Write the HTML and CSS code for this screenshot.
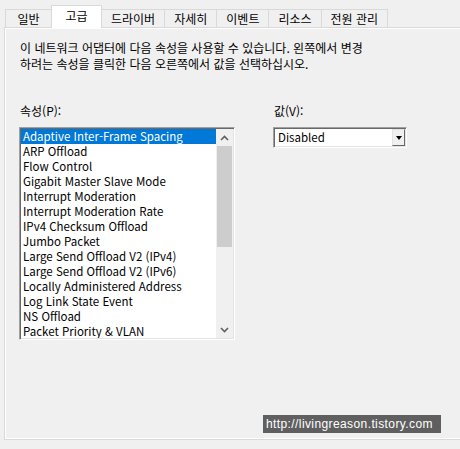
FILE: index.html
```html
<!DOCTYPE html>
<html lang="ko">
<head>
  <meta charset="UTF-8">
  <title>고급</title>
  <link rel="stylesheet" href="styles.css">
</head>
<body>
  <div class="tabs">
    <div class="tab">일반</div>
    <div class="tab active">고급</div>
    <div class="tab">드라이버</div>
    <div class="tab">자세히</div>
    <div class="tab">이벤트</div>
    <div class="tab">리소스</div>
    <div class="tab">전원 관리</div>
  </div>

  <div class="panel">
    <p class="desc">이 네트워크 어댑터에 다음 속성을 사용할 수 있습니다. 왼쪽에서 변경<br>하려는 속성을 클릭한 다음 오른쪽에서 값을 선택하십시오.</p>

    <div class="props">
      <div class="prop-col">
        <div class="label">속성(P):</div>
        <div class="listbox">
          <ul class="items">
            <li class="selected">Adaptive Inter-Frame Spacing</li>
            <li>ARP Offload</li>
            <li>Flow Control</li>
            <li>Gigabit Master Slave Mode</li>
            <li>Interrupt Moderation</li>
            <li>Interrupt Moderation Rate</li>
            <li>IPv4 Checksum Offload</li>
            <li>Jumbo Packet</li>
            <li>Large Send Offload V2 (IPv4)</li>
            <li>Large Send Offload V2 (IPv6)</li>
            <li>Locally Administered Address</li>
            <li>Log Link State Event</li>
            <li>NS Offload</li>
            <li>Packet Priority &amp; VLAN</li>
          </ul>
          <div class="scrollbar">
            <div class="arrow">
              <svg width="9" height="6" viewBox="0 0 9 6"><path d="M1 5 L4.5 1.5 L8 5" fill="none" stroke="#606060" stroke-width="1.6"/></svg>
            </div>
            <div class="track"><div class="thumb"></div></div>
            <div class="arrow">
              <svg width="9" height="6" viewBox="0 0 9 6"><path d="M1 1 L4.5 4.5 L8 1" fill="none" stroke="#606060" stroke-width="1.6"/></svg>
            </div>
          </div>
        </div>
      </div>

      <div class="value-col">
        <div class="label">값(V):</div>
        <div class="combo">
          <span class="combo-text">Disabled</span>
          <span class="combo-btn"><span class="tri"></span></span>
        </div>
      </div>
    </div>
  </div>

  <div class="watermark">http://livingreason.tistory.com</div>
</body>
</html>
```
FILE: styles.css
```css
body {
    margin: 0;
    width: 460px;
    height: 449px;
    background-color: #f0f0f0;
    font-family: "Noto Sans CJK KR", "Noto Sans", sans-serif;
    font-size: 12px;
    color: #000;
    position: relative;
    overflow: hidden;
}

/* tab strip */
.tabs {
    display: flex;
    align-items: flex-end;
    height: 27px;
    padding-left: 5px;
}

.tab {
    box-sizing: border-box;
    min-width: 47px;
    height: 18px;
    line-height: 17px;
    padding: 0 9px;
    border: 1px solid #d9d9d9;
    border-bottom: none;
    border-left: none;
    background-color: #f0f0f0;
    text-align: center;
}

.tab:first-child {
    border-left: 1px solid #d9d9d9;
}

.tab.active {
    min-width: 51px;
    height: 23px;
    line-height: 20px;
    border-left: 1px solid #d9d9d9;
    margin-left: -1px;
    background-color: #fff;
    position: relative;
    top: 1px;
    z-index: 1;
}

/* page panel */
.panel {
    margin-left: 4px;
    width: 446px;
    height: 410px;
    border: 1px solid #d9d9d9;
    box-shadow: inset 0 0 0 1px #fff;
    padding: 1px 0 0 14px;
    box-sizing: content-box;
}

.desc {
    margin: 11px 0 0 1px;
    line-height: 16px;
}

.props {
    display: flex;
    gap: 38px;
    margin-top: 31px;
}

.label {
    height: 16px;
    line-height: 16px;
    margin-left: 1px;
    margin-bottom: 8px;
}

/* list box */
.listbox {
    display: flex;
    width: 212px;
    height: 209px;
    border: 1px solid;
    border-color: #a0a0a0 #fff #fff #a0a0a0;
    box-shadow: inset 1px 1px 0 #696969, inset -1px -1px 0 #e3e3e3;
    background-color: #fff;
    padding: 1px;
    font-size: 11.5px;
}

.items {
    list-style: none;
    margin: 0;
    padding: 0;
    flex: 1;
    overflow: hidden;
}

.items li {
    height: 15px;
    line-height: 15px;
    padding-left: 2px;
    white-space: nowrap;
}

.items li.selected {
    background-color: #0078d7;
    color: #fff;
}

.scrollbar {
    width: 17px;
    display: flex;
    flex-direction: column;
    background-color: #f0f0f0;
}

.arrow {
    height: 17px;
    display: flex;
    align-items: center;
    justify-content: center;
}

.track {
    flex: 1;
}

.thumb {
    margin: 0 1px;
    height: 101px;
    background-color: #cdcdcd;
}

/* combo box */
.combo {
    display: flex;
    align-items: center;
    width: 130px;
    height: 17px;
    border: 1px solid;
    border-color: #a0a0a0 #fff #fff #a0a0a0;
    box-shadow: inset 1px 1px 0 #696969, inset -1px -1px 0 #e3e3e3;
    background-color: #fff;
    padding: 1px;
    font-size: 11.5px;
}

.combo-text {
    flex: 1;
    padding-left: 3px;
    line-height: 17px;
}

.combo-btn {
    width: 13px;
    height: 17px;
    box-sizing: border-box;
    border: 1px solid;
    border-color: #e3e3e3 #696969 #696969 #e3e3e3;
    background-color: #f0f0f0;
    display: flex;
    align-items: center;
    justify-content: center;
}

.tri {
    width: 0;
    height: 0;
    border-left: 3.5px solid transparent;
    border-right: 3.5px solid transparent;
    border-top: 4px solid #000;
}

/* blog watermark over the corner */
.watermark {
    position: absolute;
    left: 263px;
    top: 415px;
    width: 178px;
    height: 18px;
    line-height: 18px;
    box-sizing: border-box;
    padding-left: 3px;
    background-color: #5f5f5f;
    color: #fff;
    font-family: "Liberation Sans", Arial, sans-serif;
    font-size: 12px;
    letter-spacing: 0.4px;
}
```
